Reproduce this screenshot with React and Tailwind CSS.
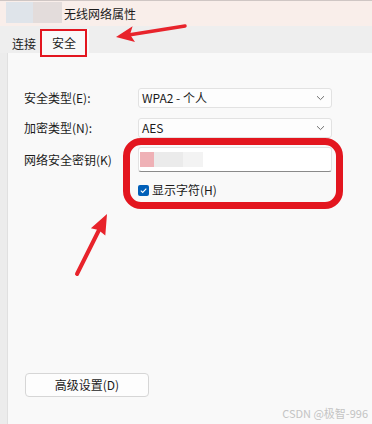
import React from "react";

const font = { fontFamily: '"Noto Sans CJK SC", "Noto Sans", sans-serif' };

const Chevron = () => (
  <svg width="9" height="6" viewBox="0 0 9 6" className="mr-[6px]">
    <path d="M1 1.2 L4.5 4.6 L8 1.2" fill="none" stroke="#707070" strokeWidth="1" />
  </svg>
);

const Select = ({ value }) => (
  <div className="h-[20px] w-[194px] flex items-center justify-between bg-[#fdfdfd] border border-[#e2e2e2] rounded-[3px] pl-[3px]">
    <span className="text-[12px] text-[#1b1b1b] leading-none">{value}</span>
    <Chevron />
  </div>
);

export default function App() {
  return (
    <div
      className="relative w-[372px] h-[424px] overflow-hidden flex flex-col bg-[#f9f9f9] text-[#1b1b1b]"
      style={font}
    >
      {/* title bar */}
      <div className="h-[26px] flex items-center bg-[#f9eeea] border-t border-[#cfc6c4]">
        <div className="ml-[6px] mb-[3px] h-[21px] w-[56px] flex blur-[0.6px]">
          <div className="w-[27px] bg-[#dfe4ea]" />
          <div className="flex-1 bg-[#e3dcdb]" />
        </div>
        <span className="ml-[2px] text-[12px] leading-none text-[#1b1b1b]">无线网络属性</span>
      </div>

      {/* tabs */}
      <div className="h-[27px] flex items-end bg-[#eeeeee]">
        <div className="h-[27px] pl-[12px] pr-[6px] pt-[8px] flex items-center text-[12px]">连接</div>
        <div className="h-[24px] w-[47px] pl-[10px] pt-[4px] flex items-center bg-[#f9f9f9] text-[12px]">安全</div>
      </div>

      {/* body */}
      <div className="flex-1 flex">
        <div className="w-[8px] bg-[#ececec] border-r border-[#e0e0e0]" />
        <div className="flex-1 flex flex-col pl-[16px] pt-[35px] pb-[27px]">
          <div className="grid grid-cols-[114px_194px] items-center text-[12px]">
            <span>安全类型(E):</span>
            <Select value="WPA2 - 个人" />
            <span className="mt-[10px]">加密类型(N):</span>
            <div className="mt-[10px]">
              <Select value="AES" />
            </div>
            <span className="mt-[9px]">网络安全密钥(K)</span>
            <div className="mt-[9px] h-[25px] bg-white border border-[#e2e2e2] border-b-[#8a8a8a] rounded-[3px] flex items-center pl-[1px]">
              <div className="h-[15px] w-[14px] bg-[#efb1b6] blur-[0.4px]" />
              <div className="h-[15px] w-[29px] bg-[#ebebeb] blur-[0.4px]" />
              <div className="h-[15px] w-[20px] bg-[#f3f3f3] blur-[0.4px]" />
            </div>
            <div />
            <div className="mt-[11px] h-[14px] flex items-center">
              <div className="w-[11px] h-[11px] rounded-[2px] bg-[#005fb8] flex items-center justify-center">
                <svg width="9" height="9" viewBox="0 0 9 9">
                  <path d="M1.8 4.6 L3.7 6.4 L7.3 2.6" fill="none" stroke="white" strokeWidth="1.1" />
                </svg>
              </div>
              <span className="ml-[3px]">显示字符(H)</span>
            </div>
          </div>

          <div className="mt-auto ml-[1px] w-[124px] h-[24px] flex items-center justify-center bg-[#fdfdfd] border border-[#d6d6d6] rounded-[4px] text-[12px]">
            高级设置(D)
          </div>
        </div>
      </div>

      {/* annotations */}
      <div className="absolute left-[40px] top-[29px] w-[47px] h-[28px] border-2 border-[#e3161f]" />
      <div className="absolute left-[123px] top-[138px] w-[220px] h-[71px] border-[7px] border-[#e3161f] rounded-[18px]" />
      <svg className="absolute left-0 top-0" width="372" height="424" viewBox="0 0 372 424">
        <line x1="185" y1="26" x2="130" y2="34.7" stroke="#e8232b" strokeWidth="3.5" strokeLinecap="round" />
        <polygon points="116,37 132.6,26.3 130,34.6 135,42.1" fill="#e8232b" />
        <line x1="77" y1="274" x2="100" y2="228" stroke="#e8232b" strokeWidth="4" strokeLinecap="round" />
        <polygon points="107,214 105.3,235.5 98.5,230 90.9,228.3" fill="#e8232b" />
      </svg>
      <div className="absolute right-[4px] bottom-[5px] text-[11px] leading-none text-[#c4c4c4]">CSDN @极智-996</div>
    </div>
  );
}
